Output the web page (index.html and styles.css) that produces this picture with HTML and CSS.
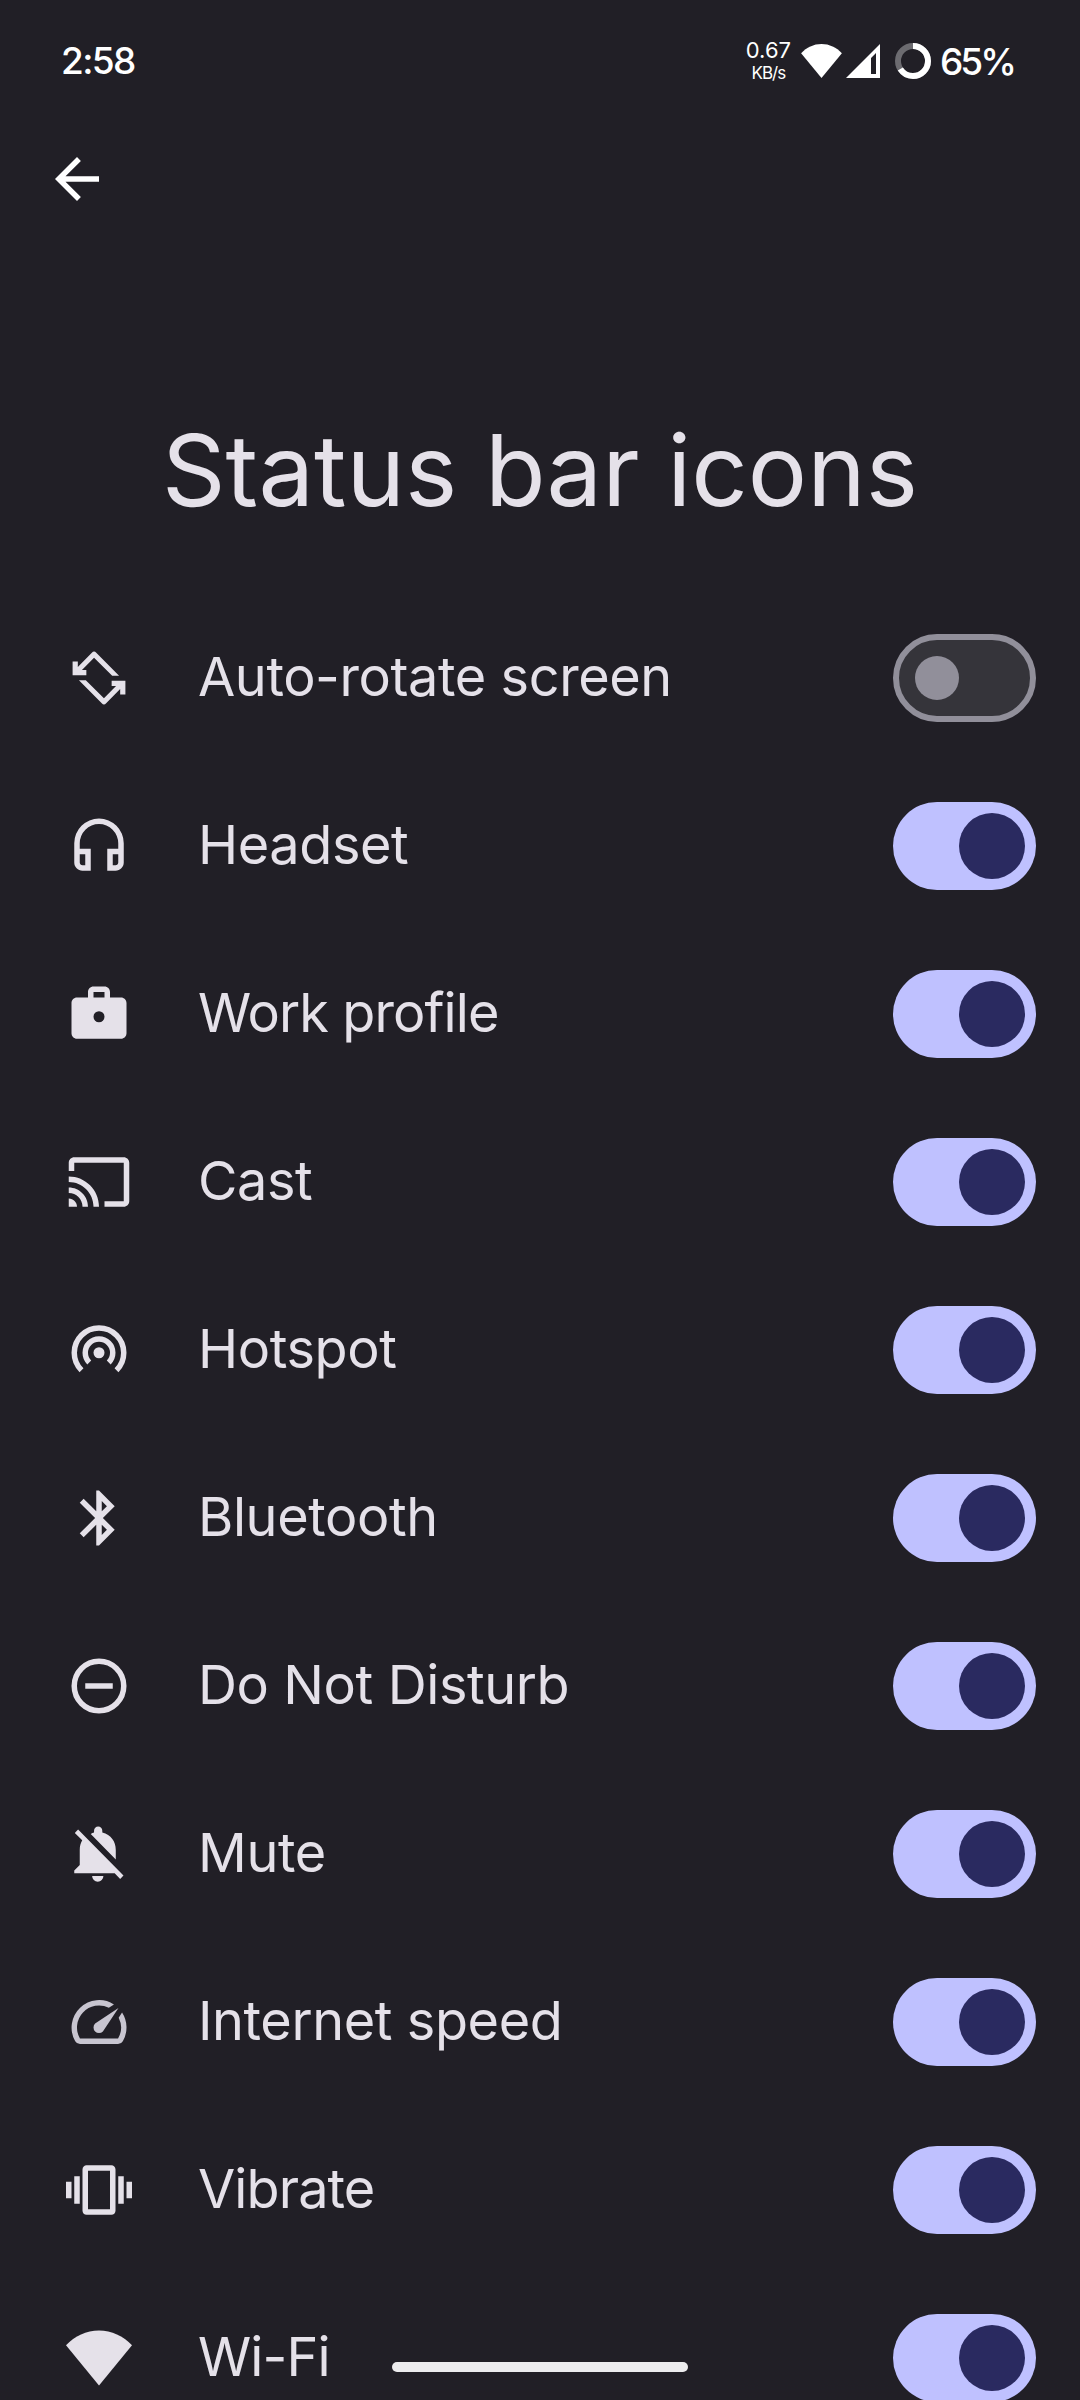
FILE: index.html
```
<!DOCTYPE html>
<html lang="en">
<head>
    <meta charset="utf-8">
    <meta name="viewport" content="width=device-width">
    <title>Status bar icons</title>
    <link rel="stylesheet" href="styles.css">
</head>
<body>
<div class="screen">
    <div class="status-bar">
        <span class="clock">2:58</span>
        <div class="net-speed">
            <span class="num">0.67</span>
            <span class="unit">KB/s</span>
        </div>
        <svg class="wifi" viewBox="0 2 24 20"><path d="M12 22L0 7.4C3.2 4 7.4 2 12 2s8.8 2 12 5.4z"/></svg>
        <svg class="signal" viewBox="0 0 34 34"><path fill-rule="evenodd" d="M34 0v34H0zM30 9l-5 5v16h5z"/></svg>
        <svg class="battery" viewBox="0 0 36 36">
            <circle class="track" cx="18" cy="18" r="15"/>
            <circle class="level" cx="18" cy="18" r="15" pathLength="100"/>
        </svg>
        <span class="percent">65%</span>
    </div>
    <div class="app-bar">
        <svg class="icon back" viewBox="0 0 24 24"><path d="M20 11H7.83l5.59-5.59L12 4l-8 8 8 8 1.41-1.41L7.83 13H20v-2z"/></svg>
    </div>
    <h1 class="title">Status bar icons</h1>
    <ul class="list">
        <li>
            <svg class="icon" viewBox="0 0 24 24"><path d="M2.4 6v5h5V9.1H5.8l4.4-4.5 6.6 6.6h2.5L11 2.8a1.1 1.1 0 0 0-1.6 0L4.3 8V6zM21.6 18v-5h-5v1.9h1.6l-4.4 4.5-6.6-6.6H4.7l8.3 8.4a1.1 1.1 0 0 0 1.6 0l5.1-5.2v2z"/></svg>
            <span class="label">Auto-rotate screen</span>
            <span class="switch"></span>
        </li>
        <li>
            <svg class="icon" viewBox="0 0 24 24"><path fill-rule="evenodd" d="M12 2a9 9 0 0 0-9 9v7c0 1.66 1.34 3 3 3h3v-8H5v-2a7 7 0 0 1 14 0v2h-4v8h3c1.66 0 3-1.34 3-3v-7a9 9 0 0 0-9-9zM7 15v4H6c-.55 0-1-.45-1-1v-3zm12 0v3c0 .55-.45 1-1 1h-1v-4z"/></svg>
            <span class="label">Headset</span>
            <span class="switch on"></span>
        </li>
        <li>
            <svg class="icon" viewBox="0 0 24 24"><path fill-rule="evenodd" d="M20 6h-4V4c0-1.11-.89-2-2-2h-4c-1.11 0-2 .89-2 2v2H4c-1.11 0-2 .89-2 2v11c0 1.11.89 2 2 2h16c1.11 0 2-.89 2-2V8c0-1.11-.89-2-2-2zM10 6V4h4v2zm2 9a2 2 0 1 1 0-4 2 2 0 0 1 0 4z"/></svg>
            <span class="label tight">Work profile</span>
            <span class="switch on"></span>
        </li>
        <li>
            <svg class="icon" viewBox="0 0 24 24"><path d="M21 3H3c-1.1 0-2 .9-2 2v3h2V5h18v14h-7v2h7c1.1 0 2-.9 2-2V5c0-1.1-.9-2-2-2zM1 18v3h3c0-1.66-1.34-3-3-3zm0-4v2c2.76 0 5 2.24 5 5h2c0-3.87-3.13-7-7-7zm0-4v2c4.97 0 9 4.03 9 9h2c0-6.08-4.93-11-11-11z"/></svg>
            <span class="label">Cast</span>
            <span class="switch on"></span>
        </li>
        <li>
            <svg class="icon" viewBox="0 0 24 24">
                <circle cx="12" cy="13" r="2"/>
                <path class="line" d="M8.46 16.54a5 5 0 1 1 7.08 0M5.64 19.36a9 9 0 1 1 12.72 0"/>
            </svg>
            <span class="label">Hotspot</span>
            <span class="switch on"></span>
        </li>
        <li>
            <svg class="icon" viewBox="0 0 24 24"><path d="M17.71 7.71L12 2h-1v7.59L6.41 5 5 6.41 10.59 12 5 17.59 6.41 19 11 14.41V22h1l5.71-5.71-4.3-4.29 4.3-4.29zM13 5.83l1.88 1.88L13 9.59V5.83zm1.88 10.46L13 18.17v-3.76l1.88 1.88z"/></svg>
            <span class="label">Bluetooth</span>
            <span class="switch on"></span>
        </li>
        <li>
            <svg class="icon" viewBox="0 0 24 24"><path class="line" d="M7 12h10M12 3a9 9 0 1 1 0 18 9 9 0 1 1 0-18z"/></svg>
            <span class="label">Do Not Disturb</span>
            <span class="switch on"></span>
        </li>
        <li>
            <svg class="icon" viewBox="0 0 24 24"><path d="M4.4 3.1l16.5 16.7-1.2 1.3-2-2.1H3v-1l2-2v-5.5c0-1.3.3-2.5.9-3.5L3.2 4.4zM18.1 14v-3.5c0-3-1.7-5.5-4.9-6.3v-.7a1.5 1.5 0 0 0-3 0v.7c-.4.1-.8.3-1.2.5zM9.5 20h4.1a2.05 2.05 0 0 1-4.1 0z"/></svg>
            <span class="label">Mute</span>
            <span class="switch on"></span>
        </li>
        <li>
            <svg class="icon dim" viewBox="0 0 24 24"><path d="M20.38 8.57l-1.23 1.85a8 8 0 0 1-.22 7.58H5.07A8 8 0 0 1 15.58 6.85l1.85-1.23A10 10 0 0 0 3.35 19a2 2 0 0 0 1.72 1h13.85a2 2 0 0 0 1.74-1 10 10 0 0 0-.27-10.44zM10.59 15.41a2 2 0 0 0 2.83 0l5.66-8.49-8.49 5.66a2 2 0 0 0 0 2.83z"/></svg>
            <span class="label">Internet speed</span>
            <span class="switch on"></span>
        </li>
        <li>
            <svg class="icon" viewBox="0 0 24 24"><path d="M0 15h2V9H0v6zm3 2h2V7H3v10zm19-8v6h2V9h-2zm-3 8h2V7h-2v10zM16.5 3h-9C6.67 3 6 3.67 6 4.5v15c0 .83.67 1.5 1.5 1.5h9c.83 0 1.5-.67 1.5-1.5v-15c0-.83-.67-1.5-1.5-1.5zM16 19H8V5h8v14z"/></svg>
            <span class="label tight">Vibrate</span>
            <span class="switch on"></span>
        </li>
        <li>
            <svg class="icon" viewBox="0 0 24 24"><path d="M12 22L0 7.4C3.2 4 7.4 2 12 2s8.8 2 12 5.4z"/></svg>
            <span class="label tight">Wi-Fi</span>
            <span class="switch on"></span>
        </li>
    </ul>
    <div class="home-bar"></div>
</div>
</body>
</html>
```
FILE: styles.css
```
* {
    margin: 0;
    padding: 0;
    box-sizing: border-box;
}
body {
    background: #211f26;
    color: #e5e1e9;
    font-family: Inter, "Open Sans", sans-serif;
}
.screen {
    position: relative;
    width: 1080px;
    height: 2400px;
    overflow: hidden;
}
/* status bar */
.status-bar {
    display: flex;
    align-items: center;
    height: 122px;
    padding: 0 66px 0 61px;
    color: #fff;
    fill: #fff;
    font-size: 37px;
    font-weight: 500;
}
.clock {
    margin-right: auto;
    padding-bottom: 1px;
    letter-spacing: -1.6px;
}
.net-speed {
    display: flex;
    flex-direction: column;
    align-items: center;
    margin-right: 10px;
    font-weight: 400;
}
.net-speed .num {
    font-size: 22px;
    line-height: 24px;
}
.net-speed .unit {
    font-size: 17px;
    line-height: 23px;
    letter-spacing: -0.9px;
}
.wifi {
    width: 41px;
    height: 34px;
    margin-right: 4px;
}
.signal {
    width: 34px;
    height: 34px;
    margin-right: 15px;
}
.battery {
    width: 36px;
    height: 36px;
    margin-right: 9px;
    fill: none;
    stroke: #fff;
    stroke-width: 6;
    transform: rotate(-90deg);
}
.battery .track {
    stroke: #6c6b70;
}
.battery .level {
    stroke-dasharray: 66 100;
}
.percent {
    width: 74px;
    letter-spacing: -3px;
}
/* header */
.app-bar {
    height: 114px;
    padding: 24px 44px;
}
.icon {
    display: block;
    flex: none;
    width: 66px;
    height: 66px;
    fill: #e5e1e9;
}
.icon .line {
    fill: none;
    stroke: #e5e1e9;
    stroke-width: 2;
}
.icon.back {
    fill: #fff;
}
.icon.dim {
    fill: #c8c5d0;
}
.title {
    height: 358px;
    padding-top: 174px;
    font-size: 99px;
    font-weight: 400;
    line-height: 120px;
    text-align: center;
    white-space: nowrap;
}
/* settings list */
.list {
    list-style: none;
}
.list li {
    display: flex;
    align-items: center;
    height: 168px;
    padding: 0 44px 0 66px;
}
.label {
    flex: 1;
    padding: 0 0 3px 66px;
    font-size: 54px;
    letter-spacing: -0.4px;
    white-space: nowrap;
}
.label.tight {
    letter-spacing: -0.9px;
}
.switch {
    display: flex;
    align-items: center;
    width: 143px;
    height: 88px;
    padding-left: 16px;
    border: 6px solid #918f9a;
    border-radius: 44px;
    background: #35343a;
}
.switch::before {
    content: "";
    width: 44px;
    height: 44px;
    border-radius: 50%;
    background: #918f9a;
}
.switch.on {
    padding-left: 66px;
    border: 0;
    background: #bfc1ff;
}
.switch.on::before {
    width: 66px;
    height: 66px;
    background: #2a2a60;
}
/* gesture bar, floats over the list */
.home-bar {
    position: absolute;
    left: 392px;
    bottom: 28px;
    width: 296px;
    height: 10px;
    border-radius: 5px;
    background: #edecee;
}
```
